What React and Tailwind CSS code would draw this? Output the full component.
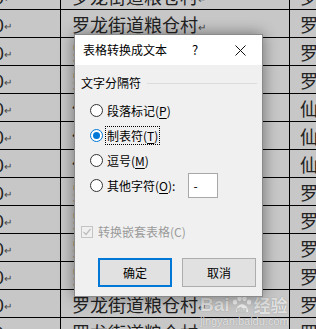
const rows = ["罗", "罗", "罗", "罗", "仙", "仙", "仙", "罗", "罗", "罗", "罗", "罗", "罗"];

function Radio({ checked }) {
  return (
    <span
      className={`flex h-[13px] w-[13px] shrink-0 items-center justify-center rounded-full border bg-white ${
        checked ? "border-[#0078d7]" : "border-[#333333]"
      }`}
    >
      {checked ? <span className="h-[7px] w-[7px] rounded-full bg-[#0078d7]" /> : null}
    </span>
  );
}

function Option({ checked, focused, text, mnemonic, suffix = "" }) {
  return (
    <div className="flex h-[25px] items-center gap-[2px]">
      <Radio checked={checked} />
      <span
        className={`flex h-[19px] items-center border px-[1px] text-[12px] leading-none text-black ${
          focused ? "border-dotted border-black" : "border-transparent"
        }`}
      >
        {text}(<span className="underline underline-offset-[2px]">{mnemonic}</span>){suffix}
      </span>
    </div>
  );
}

export default function App() {
  return (
    <div className="relative h-[329px] w-[316px] overflow-hidden bg-[#c7c7c7] font-['Noto_Sans_CJK_SC',sans-serif]">
      <div className="-mt-[18px]">
        {rows.map((ch, i) => (
          <div key={i} className="flex h-[28px] border-b border-black">
            <div className="flex w-[61px] shrink-0 items-center border-r border-black">
              <span className="-ml-[6px] text-[18px] leading-none text-[#222]">0</span>
              <span className="mt-[4px] text-[10px] leading-none text-[#444]">↵</span>
            </div>
            <div className="flex w-[229px] shrink-0 items-center border-r border-black pl-[11px]">
              <span className="text-[18px] leading-none text-[#222]">
                {ch === "罗" ? "罗龙街道粮仓村" : "仙岩街道仙岩村"}
              </span>
              <span className="mt-[6px] text-[10px] leading-none text-[#444]">↵</span>
            </div>
            <div className="flex flex-1 items-center pl-[10px]">
              <span className="text-[18px] leading-none text-[#222]">{ch}</span>
            </div>
          </div>
        ))}
      </div>

      <div className="absolute left-[200px] top-[295px] flex flex-col text-white/75 [text-shadow:0_0_1px_rgba(0,0,0,0.35)]">
        <div className="flex items-center font-['Liberation_Sans',sans-serif] text-[19px] font-bold leading-none">
          <span>Bai</span>
          <span className="relative mx-[1px] flex h-[18px] w-[22px] items-end justify-center">
            <svg width="22" height="18" viewBox="0 0 22 18" className="absolute inset-0">
              <g fill="rgba(255,255,255,0.75)">
                <ellipse cx="4" cy="6" rx="2.2" ry="2.6" />
                <ellipse cx="8.5" cy="2.6" rx="2.2" ry="2.6" />
                <ellipse cx="13.5" cy="2.6" rx="2.2" ry="2.6" />
                <ellipse cx="18" cy="6" rx="2.2" ry="2.6" />
                <path d="M5 16 Q5 9 11 8 Q17 9 17 16 Z" />
              </g>
            </svg>
            <span className="relative text-[8px] text-[#c7c7c7]">du</span>
          </span>
          <span className="font-['Noto_Sans_CJK_SC',sans-serif] text-[17px]">经验</span>
        </div>
        <span className="mt-[2px] font-['Liberation_Sans',sans-serif] text-[11px] leading-none">
          jingyan.baidu.com
        </span>
      </div>

      <div className="absolute left-[74px] top-[34px] flex h-[263px] w-[189px] flex-col border border-[#8a8a8a] bg-[#f0f0f0] shadow-[0_0_14px_rgba(0,0,0,0.45)]">
        <div className="flex h-[30px] shrink-0 items-center bg-white">
          <span className="pl-[8px] text-[12px] leading-none text-black">表格转换成文本</span>
          <span className="ml-auto flex h-full w-[40px] items-center justify-center text-[13px] text-black">?</span>
          <span className="ml-[4px] flex h-full w-[43px] items-center justify-center">
            <svg width="11" height="11" viewBox="0 0 11 11">
              <path d="M0.5 0.5 L10.5 10.5 M10.5 0.5 L0.5 10.5" stroke="#111" strokeWidth="1" />
            </svg>
          </span>
        </div>

        <div className="flex flex-col pt-[10px]">
          <div className="flex h-[16px] items-center pl-[6px] pr-[5px]">
            <span className="text-[12px] leading-none text-black">文字分隔符</span>
            <span className="ml-[6px] h-px flex-1 bg-[#dcdcdc]" />
          </div>

          <div className="mt-[7px] flex flex-col pl-[15px]">
            <Option text="段落标记" mnemonic="P" />
            <Option checked focused text="制表符" mnemonic="T" />
            <Option text="逗号" mnemonic="M" />
            <div className="flex items-center">
              <Option text="其他字符" mnemonic="O" suffix=":" />
              <div className="ml-[11px] flex h-[25px] w-[30px] items-center border border-[#a8a8a8] bg-white pl-[4px] text-[12px] text-black">
                -
              </div>
            </div>
          </div>

          <div className="mt-[26px] flex h-[16px] items-center gap-[5px] pl-[6px]">
            <span className="flex h-[12px] w-[12px] items-center justify-center border border-[#c4c4c4]">
              <svg width="10" height="10" viewBox="0 0 10 10">
                <path d="M1.5 5 L4 7.5 L8.5 2" fill="none" stroke="#bcbcbc" strokeWidth="1.2" />
              </svg>
            </span>
            <span className="text-[12px] leading-none text-[#9a9a9a]">转换嵌套表格(C)</span>
          </div>

          <div className="mt-[18px] flex gap-[10px] pl-[23px]">
            <button
              type="button"
              className="flex h-[29px] w-[74px] items-center justify-center border-2 border-[#0078d7] bg-[#e1e1e1] text-[12px] text-black"
            >
              确定
            </button>
            <button
              type="button"
              className="flex h-[29px] w-[74px] items-center justify-center border border-[#adadad] bg-[#e1e1e1] text-[12px] text-black"
            >
              取消
            </button>
          </div>
        </div>
      </div>
    </div>
  );
}
